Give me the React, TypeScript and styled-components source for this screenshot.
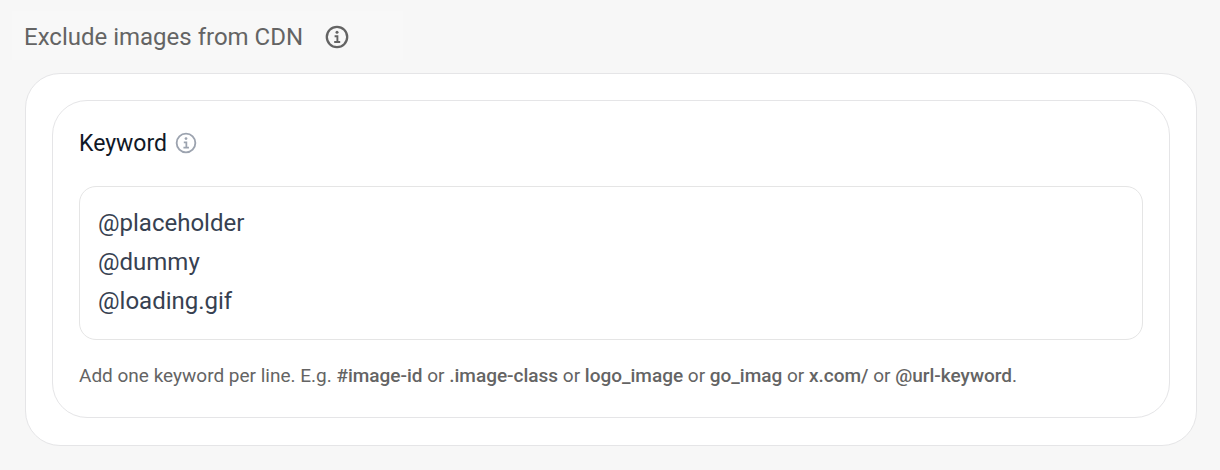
import React from "react";
import styled, { createGlobalStyle } from "styled-components";

const GlobalStyle = createGlobalStyle`
  *, *::before, *::after { box-sizing: border-box; }
  body {
    margin: 0;
    background: #f7f7f7;
    font-family: Roboto, "Liberation Sans", sans-serif;
    color: #646464;
  }
`;

const Page = styled.main`
  padding: 11px 23px 24px 12px;
`;

const Header = styled.header`
  display: flex;
  align-items: center;
  gap: 22px;
  width: 391px;
  max-width: 100%;
  height: 49px;
  padding: 2px 12px 0;
  background: #f8f8f8;
`;

const Title = styled.h2`
  margin: 0;
  font-size: 24px;
  line-height: 32px;
  font-weight: 400;
  color: #646464;
`;

const Card = styled.section`
  margin: 13px 0 0 13px;
  padding: 26px 26px 27px;
  background: #fff;
  border: 1px solid #e5e5e7;
  border-radius: 35px;
`;

const Panel = styled.div`
  padding: 26px 26px 25px;
  border: 1px solid #e5e5e7;
  border-radius: 35px;
`;

const LabelRow = styled.div`
  display: flex;
  align-items: center;
  gap: 8px;
  height: 32px;
`;

const Label = styled.label`
  padding-top: 2px;
  font-size: 23px;
  line-height: 32px;
  color: #111827;
`;

const InfoButton = styled.button<{ $color: string }>`
  display: flex;
  padding: 0;
  border: 0;
  background: none;
  color: ${(p) => p.$color};
  cursor: pointer;
`;

const Keywords = styled.textarea`
  display: block;
  width: 100%;
  height: 154px;
  margin: 27px 0 20px;
  padding: 17px 18px;
  border: 1px solid #e5e5e5;
  border-radius: 17px;
  background: #fff;
  color: #374151;
  font-family: inherit;
  font-size: 24px;
  line-height: 39px;
  resize: none;
  overflow: hidden;
  outline: none;
`;

const Hint = styled.p`
  margin: 0;
  font-size: 19px;
  line-height: 32px;
  color: #646464;
`;

const Term = styled.strong`
  font-weight: 500;
`;

function InfoIcon({ size, stroke }: { size: number; stroke: number }) {
  return (
    <svg width={size} height={size} viewBox="0 0 24 24" fill="none" stroke="currentColor" aria-hidden="true">
      <circle cx="12" cy="12" r="10.2" strokeWidth={stroke} />
      <circle cx="12" cy="7.2" r="1.5" fill="currentColor" stroke="none" />
      <path d="M9.6 11.2H12.4V17M9.2 17H15.2" strokeWidth="1.9" />
    </svg>
  );
}

const terms = ["#image-id", ".image-class", "logo_image", "go_imag", "x.com/", "@url-keyword"];

export default function App() {
  return (
    <>
      <GlobalStyle />
      <Page>
        <Header>
          <Title>Exclude images from CDN</Title>
          <InfoButton type="button" $color="#646464" aria-label="About excluding images">
            <InfoIcon size={24} stroke={2.3} />
          </InfoButton>
        </Header>
        <Card>
          <Panel>
            <LabelRow>
              <Label htmlFor="keywords">Keyword</Label>
              <InfoButton type="button" $color="#9ca3af" aria-label="About keywords">
                <InfoIcon size={22} stroke={2} />
              </InfoButton>
            </LabelRow>
            <Keywords
              id="keywords"
              aria-describedby="keywords-hint"
              spellCheck={false}
              defaultValue={"@placeholder\n@dummy\n@loading.gif"}
            />
            <Hint id="keywords-hint">
              Add one keyword per line. E.g.{" "}
              {terms.map((term, i) => (
                <React.Fragment key={term}>
                  {i > 0 && " or "}
                  <Term>{term}</Term>
                </React.Fragment>
              ))}
              .
            </Hint>
          </Panel>
        </Card>
      </Page>
    </>
  );
}
